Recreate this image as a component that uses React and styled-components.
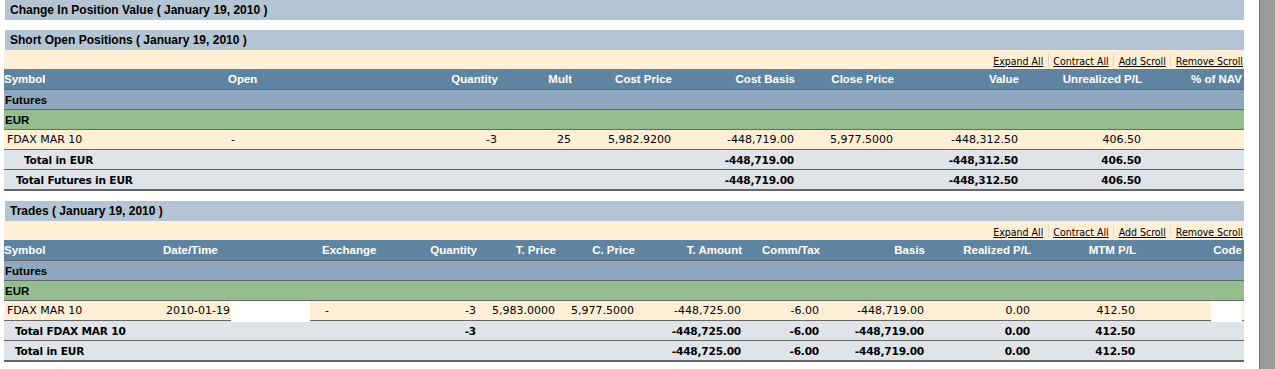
import React from "react";
import styled, { createGlobalStyle } from "styled-components";

const Global = createGlobalStyle`
  html, body { margin: 0; padding: 0; background: #fff; height: 100%; }
  #root { height: 100%; }
`;

const SHORT_COLS = "224px 202px 70px 74px 100px 123px 99px 125px 123px 100px";
const TRADE_COLS = "159px 159px 98px 59px 79px 79px 107px 78px 105px 106px 105px 106px";

const Page = styled.div`
  display: flex;
  height: 100%;
  min-height: 369px;
`;

const Main = styled.main`
  flex: 0 0 1240px;
  margin-left: 4px;
`;

const Strip = styled.div`
  flex: 1;
  margin-left: 15px;
  background: #9b9b9b;
  border-left: 1px solid #6f6f6f;
`;

const Section = styled.section`
  margin-bottom: 10px;
`;

const Bar = styled.div`
  height: 20px;
  margin-left: 1px;
  padding-left: 5px;
  display: flex;
  align-items: center;
  background: #b4c4d2;
  color: #000;
  font: bold 12px "Liberation Sans", Arial, sans-serif;
  white-space: nowrap;
`;

const Toolbar = styled.div`
  height: 19px;
  box-sizing: border-box;
  padding: 2px 1px 0 0;
  display: flex;
  justify-content: flex-end;
  align-items: center;
  background: #ffefd6;
  font: 10.5px "DejaVu Sans Condensed", "DejaVu Sans", sans-serif;
`;

const Link = styled.a`
  color: #000;
  text-decoration: underline;
  cursor: pointer;
`;

const Sep = styled.span`
  width: 1px;
  height: 13px;
  margin: 0 4.5px;
  background: #e6d9c4;
`;

const bgs = {
  head: "#5f84a1",
  group: "#8fa8bf",
  ccy: "#95bd90",
  data: "#ffefd6",
  total: "#e0e3e8",
};

const Row = styled.div`
  display: grid;
  grid-template-columns: ${(p) => p.$cols};
  height: ${(p) => (p.$kind === "head" || p.$last ? 21 : 20)}px;
  box-sizing: border-box;
  border-bottom: ${(p) => (p.$last ? 2 : 1)}px solid #666;
  background: ${(p) => bgs[p.$kind]};
`;

const HeadCell = styled.div`
  display: flex;
  align-items: center;
  justify-content: ${(p) => (p.$left ? "flex-start" : "flex-end")};
  padding-right: ${(p) => (p.$left ? 0 : 2)}px;
  color: #fff;
  font: bold 11.5px "Liberation Sans", Arial, sans-serif;
  white-space: nowrap;
`;

const GroupLabel = styled.div`
  grid-column: 1 / -1;
  display: flex;
  align-items: center;
  padding-left: 1px;
  color: #000;
  font: bold 11.5px "Liberation Sans", Arial, sans-serif;
`;

const Cell = styled.div`
  position: relative;
  display: flex;
  align-items: center;
  justify-content: ${(p) => (p.$left ? "flex-start" : "flex-end")};
  padding: 0 3px 0 ${(p) => (p.$indent ?? 3)}px;
  white-space: nowrap;
  color: #000;
  font-family: "DejaVu Sans", Verdana, sans-serif;
  font-size: ${(p) => (p.$bold ? 10.6 : 11)}px;
  font-weight: ${(p) => (p.$bold ? "bold" : "normal")};
  letter-spacing: ${(p) => (p.$bold ? "-0.2px" : "0")};
`;

const Redact = styled.span`
  position: absolute;
  top: 0;
  height: 21px;
  background: #fff;
  z-index: 1;
  ${(p) => (p.$right != null ? `right: ${p.$right}px;` : `left: ${p.$leftPos}px;`)}
  width: ${(p) => p.$w}px;
`;

const Links = () => (
  <Toolbar>
    <Link>Expand All</Link>
    <Sep />
    <Link>Contract All</Link>
    <Sep />
    <Link>Add Scroll</Link>
    <Sep />
    <Link>Remove Scroll</Link>
  </Toolbar>
);

const Header = ({ cols, items }) => (
  <Row $cols={cols} $kind="head">
    {items.map(([label, left]) => (
      <HeadCell key={label} $left={left}>
        {label}
      </HeadCell>
    ))}
  </Row>
);

const Group = ({ cols, kind, label }) => (
  <Row $cols={cols} $kind={kind}>
    <GroupLabel>{label}</GroupLabel>
  </Row>
);

const shortHead = [
  ["Symbol", true],
  ["Open", true],
  ["Quantity"],
  ["Mult"],
  ["Cost Price"],
  ["Cost Basis"],
  ["Close Price"],
  ["Value"],
  ["Unrealized P/L"],
  ["% of NAV"],
];

const tradeHead = [
  ["Symbol", true],
  ["Date/Time", true],
  ["Exchange", true],
  ["Quantity"],
  ["T. Price"],
  ["C. Price"],
  ["T. Amount"],
  ["Comm/Tax"],
  ["Basis"],
  ["Realized P/L"],
  ["MTM P/L"],
  ["Code"],
];

const ShortTotal = ({ label, indent, last }) => (
  <Row $cols={SHORT_COLS} $kind="total" $last={last}>
    <Cell $left $bold $indent={indent}>{label}</Cell>
    <Cell />
    <Cell />
    <Cell />
    <Cell />
    <Cell $bold>-448,719.00</Cell>
    <Cell />
    <Cell $bold>-448,312.50</Cell>
    <Cell $bold>406.50</Cell>
    <Cell />
  </Row>
);

const TradeTotal = ({ label, qty, last }) => (
  <Row $cols={TRADE_COLS} $kind="total" $last={last}>
    <Cell $left $bold $indent={11}>{label}</Cell>
    <Cell />
    <Cell />
    <Cell $bold>{qty}</Cell>
    <Cell />
    <Cell />
    <Cell $bold>-448,725.00</Cell>
    <Cell $bold>-6.00</Cell>
    <Cell $bold>-448,719.00</Cell>
    <Cell $bold>0.00</Cell>
    <Cell $bold>412.50</Cell>
    <Cell />
  </Row>
);

export default function App() {
  return (
    <>
      <Global />
      <Page>
        <Main>
          <Section>
            <Bar>Change In Position Value ( January 19, 2010 )</Bar>
          </Section>

          <Section>
            <Bar>Short Open Positions ( January 19, 2010 )</Bar>
            <Links />
            <Header cols={SHORT_COLS} items={shortHead} />
            <Group cols={SHORT_COLS} kind="group" label="Futures" />
            <Group cols={SHORT_COLS} kind="ccy" label="EUR" />
            <Row $cols={SHORT_COLS} $kind="data">
              <Cell $left>FDAX MAR 10</Cell>
              <Cell $left>-</Cell>
              <Cell>-3</Cell>
              <Cell>25</Cell>
              <Cell>5,982.9200</Cell>
              <Cell>-448,719.00</Cell>
              <Cell>5,977.5000</Cell>
              <Cell>-448,312.50</Cell>
              <Cell>406.50</Cell>
              <Cell />
            </Row>
            <ShortTotal label="Total in EUR" indent={20} />
            <ShortTotal label="Total Futures in EUR" indent={12} last />
          </Section>

          <Section>
            <Bar>Trades ( January 19, 2010 )</Bar>
            <Links />
            <Header cols={TRADE_COLS} items={tradeHead} />
            <Group cols={TRADE_COLS} kind="group" label="Futures" />
            <Group cols={TRADE_COLS} kind="ccy" label="EUR" />
            <Row $cols={TRADE_COLS} $kind="data">
              <Cell $left>FDAX MAR 10</Cell>
              <Cell $left>
                2010-01-19
                <Redact $leftPos={68} $w={79} />
              </Cell>
              <Cell $left>-</Cell>
              <Cell>-3</Cell>
              <Cell>5,983.0000</Cell>
              <Cell>5,977.5000</Cell>
              <Cell>-448,725.00</Cell>
              <Cell>-6.00</Cell>
              <Cell>-448,719.00</Cell>
              <Cell>0.00</Cell>
              <Cell>412.50</Cell>
              <Cell>
                <Redact $right={2} $w={31} />
              </Cell>
            </Row>
            <TradeTotal label="Total FDAX MAR 10" qty="-3" />
            <TradeTotal label="Total in EUR" last />
          </Section>
        </Main>
        <Strip />
      </Page>
    </>
  );
}
